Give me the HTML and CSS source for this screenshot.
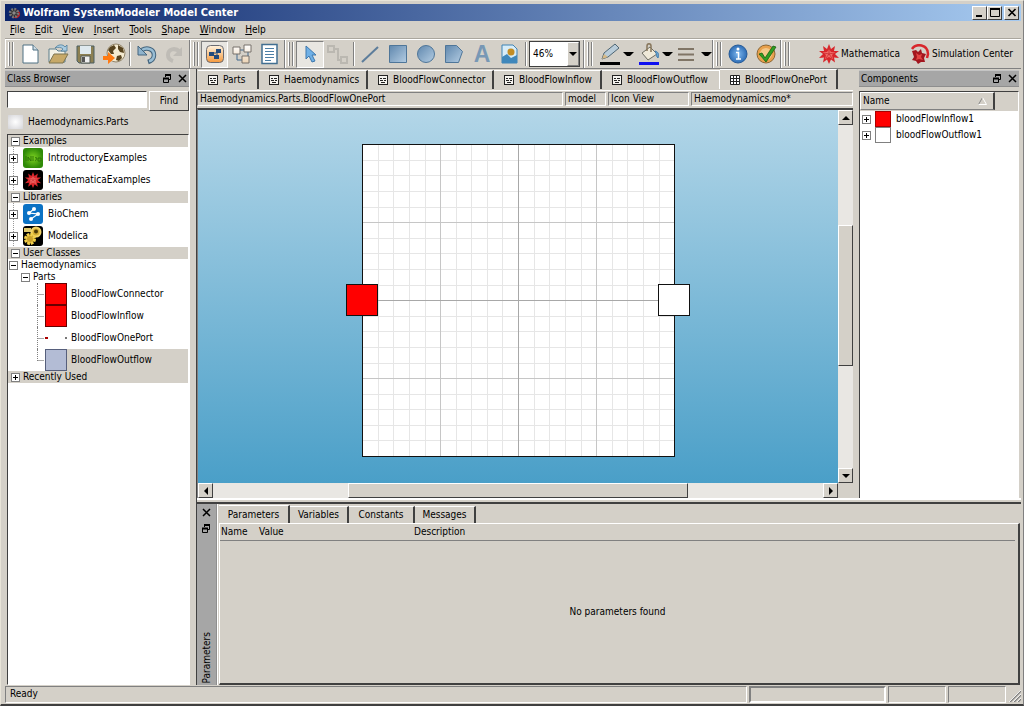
FILE: index.html
```html
<!DOCTYPE html>
<html lang="en">
<head>
<meta charset="utf-8">
<title>Wolfram SystemModeler Model Center</title>
<link rel="stylesheet" href="styles.css">
</head>
<body>
<svg class="defs" aria-hidden="true">
  <defs>
    <linearGradient id="blue" x1="0" y1="0" x2="1" y2="1"><stop offset="0" stop-color="#5f87ad"/><stop offset="1" stop-color="#b4cde3"/></linearGradient>
    <linearGradient id="orange" x1="0" y1="0" x2="0" y2="1"><stop offset="0" stop-color="#fff3df"/><stop offset="1" stop-color="#f5993c"/></linearGradient>
    <linearGradient id="pale" x1="0" y1="0" x2="0" y2="1"><stop offset="0" stop-color="#ffffff"/><stop offset="1" stop-color="#ecd3b4"/></linearGradient>
    <radialGradient id="green"><stop offset="0" stop-color="#7ed321"/><stop offset="1" stop-color="#2f8a08"/></radialGradient>
    <radialGradient id="info"><stop offset="0" stop-color="#7db7ee"/><stop offset="1" stop-color="#2d6cb5"/></radialGradient>
    <symbol id="plus" viewBox="0 0 9 9"><rect x=".5" y=".5" width="8" height="8" fill="#fff" stroke="#808080"/><path d="M2 4.5h5M4.5 2v5" stroke="#000"/></symbol>
    <symbol id="minus" viewBox="0 0 9 9"><rect x=".5" y=".5" width="8" height="8" fill="#fff" stroke="#808080"/><path d="M2 4.5h5" stroke="#000"/></symbol>
    <symbol id="float" viewBox="0 0 9 9"><path d="M2.5 3V1.5h5v4H6" fill="none" stroke="#000"/><path d="M2 1h6" stroke="#000" stroke-width="2"/><path d="M.5 4v4.500h5V4" fill="none" stroke="#000"/><path d="M0 4.500h6" stroke="#000" stroke-width="2"/></symbol>
    <symbol id="close" viewBox="0 0 9 9"><path d="M1 1l7 7M8 1L1 8" stroke="#000" stroke-width="1.500"/></symbol>
    <symbol id="diagram" viewBox="0 0 10 10"><rect x=".5" y=".5" width="9" height="9" fill="#f4f2ee" stroke="#222"/><path d="M2 3.500h2M5 3.500h3M2 5.500h3M6 5.500h2M3 7.500h4" stroke="#222"/></symbol>
    <symbol id="grid" viewBox="0 0 10 10"><path d="M.5 .5h9v9h-9zM3.500 0v10M6.500 0v10M0 3.500h10M0 6.500h10" fill="#fff" stroke="#222"/></symbol>
    <symbol id="spikey" viewBox="0 0 20 20"><path d="M10 0l2 5 4-3-1 5 5 0-4 3 4 4-5-.500 1 5-4-3-2 4.500-2-4.500-4 3 1-5-5 .500 4-4-4-3 5 0-1-5 4 3z" fill="#d8262b"/><path d="M10 5l2 3 4 0-3 3 1 4-4-2-4 2 1-4-3-3 4 0z" fill="#f26a66"/><path d="M10 5v5l5-1M10 10l3 4M10 10l-3 4M10 10L5 9" fill="none" stroke="#c0242a" stroke-width=".7"/></symbol>
  </defs>
</svg>
<div class="window">
  <header class="titlebar">
    <svg class="app-icon" viewBox="0 0 16 16"><circle cx="10" cy="9" r="5" fill="#b0232b"/><circle cx="8" cy="8" r="4.500" fill="#333" stroke="#777" stroke-width="3" stroke-dasharray="2 1.500"/><circle cx="8" cy="8" r="2" fill="#888"/></svg>
    <h1>Wolfram SystemModeler Model Center</h1>
    <div class="win-buttons">
      <button class="win-btn" aria-label="Minimize"><svg viewBox="0 0 10 9"><path d="M1 8h6" stroke="#000" stroke-width="2"/></svg></button>
      <button class="win-btn" aria-label="Maximize"><svg viewBox="0 0 10 9"><path d="M.5 1.500v7h9v-7" fill="none" stroke="#000"/><path d="M0 1h10" stroke="#000" stroke-width="2"/></svg></button>
      <button class="win-btn last" aria-label="Close"><svg viewBox="0 0 10 9"><path d="M1.500 1l7 7M8.500 1l-7 7" stroke="#000" stroke-width="1.700"/></svg></button>
    </div>
  </header>
  <nav class="menubar">
    <button><u>F</u>ile</button><button><u>E</u>dit</button><button><u>V</u>iew</button><button><u>I</u>nsert</button><button><u>T</u>ools</button><button><u>S</u>hape</button><button><u>W</u>indow</button><button><u>H</u>elp</button>
  </nav>
  <div class="toolbars">
    <div class="toolbar tb-file">
      <i class="handle"></i>
      <button class="tool" aria-label="New"><svg viewBox="0 0 24 24"><path d="M5 3h10l5 5v13H5z" fill="#fff" stroke="#4f7183"/><path d="M15 3v5h5" fill="#cfdde6" stroke="#4f7183"/></svg></button>
      <button class="tool" aria-label="Open"><svg viewBox="0 0 24 24"><path d="M3 20V7h7l2 2h7v11z" fill="#f3f1e4" stroke="#5d7f8d"/><path d="M3 21l5-9h14l-5 9z" fill="#c7a968" stroke="#7d7450"/><path d="M9 6c3-4 8-4 10-1l2-2v6h-6l2-2c-2-2-5-2-8-1z" fill="#a9cbe0" stroke="#4f7e9c" stroke-width=".8"/></svg></button>
      <button class="tool" aria-label="Save"><svg viewBox="0 0 24 24"><path d="M3 4h17v17H5l-2-2z" fill="#8d8052" stroke="#4b5f62"/><path d="M6 4h11v8H6z" fill="#dfe9ee"/><path d="M7 14h9v7H7z" fill="#eee" stroke="#545a50"/><path d="M8 15h3v5H8z" fill="#555"/></svg></button>
      <button class="tool" aria-label="Import from web"><svg viewBox="0 0 24 24"><circle cx="14" cy="11" r="9" fill="#f4ead0" stroke="#92846a"/><path d="M8 5l4-2 2 3-3 3 1 3-3 0-3-4zM16 3l5 3 1 5-4-1-2-3zM15 14l4-1 1 3-3 3-3-1z" fill="#57431f"/><path d="M1 14h5v-4l7 6-7 6v-4H1z" fill="#ff7a12"/></svg></button>
      <i class="sep"></i>
      <button class="tool" aria-label="Undo"><svg viewBox="0 0 24 24"><path d="M8 8c5-3 12-1 12 5 0 4-3 6-6 7" fill="none" stroke="#45657e" stroke-width="4.500"/><path d="M8 8c5-3 12-1 12 5 0 4-3 6-5 6" fill="none" stroke="#98bdd4" stroke-width="2.500"/><path d="M4 4v9h9z" fill="#8fb3cc" stroke="#45657e"/></svg></button>
      <button class="tool" aria-label="Redo" disabled><svg viewBox="0 0 24 24"><path d="M18 10c-5-5-12-3-12 3 0 3 2 5 5 6" fill="none" stroke="#bfbcb6" stroke-width="4"/><path d="M20 5v9h-9z" fill="#bfbcb6"/></svg></button>
    </div>
    <div class="toolbar tb-view">
      <i class="handle"></i>
      <button class="tool active" aria-label="Icon view"><svg viewBox="0 0 24 24"><rect x="3.500" y="3.500" width="17" height="17" rx="4" fill="url(#orange)" stroke="#6a6a70"/><path d="M6 10h5v4H6zM13 7h5v4h-5zM11 13h5v4h-5z" fill="#234b7d"/><path d="M11 11h2M14 11v3" stroke="#234b7d"/></svg></button>
      <button class="tool" aria-label="Diagram view"><svg viewBox="0 0 24 24"><path d="M10 8h4M7 12v6h5M18 10v5" fill="none" stroke="#456a8e"/><path d="M3 5h7v7H3zM14 3h7v7h-7zM12 14h7v7h-7z" fill="url(#pale)" stroke="#76716a"/></svg></button>
      <button class="tool" aria-label="Text view"><svg viewBox="0 0 24 24"><path d="M5 2.500h15v19H5z" fill="#fff" stroke="#426f91" stroke-width="1.500"/><path d="M8 6.500h9M8 9.500h9M8 12.500h9M8 15.500h9M8 18.500h6" stroke="#4c7fa6"/></svg></button>
    </div>
    <div class="toolbar tb-draw">
      <i class="handle"></i>
      <button class="tool active" aria-label="Select"><svg viewBox="0 0 24 24"><path d="M8 4l10 9h-4l3 6-3 1-3-6-3 3z" fill="#6fb0e6" stroke="#3f78ad"/></svg></button>
      <button class="tool" aria-label="Connect" disabled><svg viewBox="0 0 24 24"><path d="M2 4h6v6H2zM15 15h6v6h-6zM8 7h4v11h3" fill="none" stroke="#bbb8b1" stroke-width="2"/></svg></button>
      <i class="sep"></i>
      <button class="tool" aria-label="Line"><svg viewBox="0 0 24 24"><path d="M4 20L20 5" stroke="#5d7d9b" stroke-width="2"/></svg></button>
      <button class="tool" aria-label="Rectangle"><svg viewBox="0 0 24 24"><path d="M3.500 3.500h17v17h-17z" fill="url(#blue)" stroke="#4f7699"/></svg></button>
      <button class="tool" aria-label="Ellipse"><svg viewBox="0 0 24 24"><circle cx="12" cy="12" r="8.500" fill="url(#blue)" stroke="#4f7699"/></svg></button>
      <button class="tool" aria-label="Polygon"><svg viewBox="0 0 24 24"><path d="M3.500 3.500h11l6 6-4 11h-13z" fill="url(#blue)" stroke="#4f7699"/></svg></button>
      <button class="tool glyph" aria-label="Text">A</button>
      <button class="tool" aria-label="Bitmap"><svg viewBox="0 0 24 24"><path d="M4 3h11l4 4v14H4z" fill="#d7ecf8" stroke="#3f83b5"/><path d="M4 15l5-3 4 4 6-3v8H4z" fill="#3f87bb"/><circle cx="13" cy="10" r="3.500" fill="#c28c24"/></svg></button>
      <i class="sep"></i>
      <label class="zoom"><select aria-label="Zoom"><option>46%</option></select><span class="drop"></span></label>
    </div>
    <div class="toolbar tb-style">
      <i class="handle"></i>
      <button class="tool" aria-label="Line color"><svg viewBox="0 0 24 24"><path d="M4 17l2-6L17 2l4 4-11 9z" fill="#b9ccd9" stroke="#4e6674"/><path d="M4 17l2-5 4 3z" fill="#d7b985"/><path d="M2 21.500h20" stroke="#000" stroke-width="3"/></svg></button><i class="caret"></i>
      <button class="tool" aria-label="Fill color"><svg viewBox="0 0 24 24"><path d="M5 11l8-6 7 7-9 6z" fill="#efe9d8" stroke="#6c6c62"/><path d="M10 9V4c0-3 4-3 4 0v6" fill="none" stroke="#87765b" stroke-width="1.500"/><path d="M18 9c4 1 4 4 3 7-2-1-1-4-3-7" fill="#6ca5d0" stroke="#4581b1"/><path d="M2 21.500h20" stroke="#1010f0" stroke-width="3"/></svg></button><i class="caret"></i>
      <button class="tool" aria-label="Line style"><svg viewBox="0 0 24 24"><path d="M2 7h16M2 12.500h16M2 18h16" stroke="#807566" stroke-width="2"/></svg></button><i class="caret"></i>
    </div>
    <div class="toolbar tb-check">
      <i class="handle"></i>
      <button class="tool" aria-label="Information"><svg viewBox="0 0 24 24"><circle cx="12" cy="12" r="9" fill="url(#info)" stroke="#265b98"/><circle cx="12" cy="7" r="1.500" fill="#fff"/><path d="M10 10.500h2.500v6M10 17h5" fill="none" stroke="#fff" stroke-width="1.500"/></svg></button>
      <button class="tool" aria-label="Validate"><svg viewBox="0 0 24 24"><circle cx="12" cy="12" r="9" fill="#e8a04c" stroke="#8c6735"/><circle cx="12" cy="12" r="6" fill="#f4c888"/><path d="M5 12l3-1 3 5 8-12 3 1-10 15z" fill="#2f9e22" stroke="#17600f" stroke-width=".8"/></svg></button>
    </div>
    <div class="toolbar tb-apps">
      <i class="handle"></i>
      <div class="apps">
        <button class="app"><svg viewBox="0 0 20 20"><use href="#spikey"/></svg>Mathematica</button>
        <button class="app"><svg viewBox="0 0 20 20"><path d="M2 5C6-1 18 0 18 10l-1 4" fill="none" stroke="#d8262b" stroke-width="2.500"/><path d="M2 7l4-1 2 2 3-3 1 4 4 1-2 4 1 4-4 0-3 2-2-3-4-1 2-3z" fill="#a3161e"/><path d="M6 9l3 2 3-1-1 3 2 3-4-1-3 1 1-3z" fill="#e34343"/></svg>Simulation Center</button>
      </div>
    </div>
  </div>
  <main class="workspace">
    <aside class="dock browser">
      <div class="dock-title"><h2>Class Browser</h2><button aria-label="Float"><svg viewBox="0 0 9 9"><use href="#float"/></svg></button><button aria-label="Close"><svg viewBox="0 0 9 9"><use href="#close"/></svg></button></div>
      <form class="find"><input type="text" aria-label="Class name"><button type="button">Find</button></form>
      <div class="current"><i class="swatch"></i>Haemodynamics.Parts</div>
      <div class="tree">
        <div class="section"><button aria-label="Collapse"><svg viewBox="0 0 9 9"><use href="#minus"/></svg></button>Examples</div>
        <div class="node"><button aria-label="Expand"><svg viewBox="0 0 9 9"><use href="#plus"/></svg></button><svg class="pic" viewBox="0 0 20 20"><rect width="20" height="20" rx="3" fill="url(#green)"/><path d="M3 8v5M5 13V9l3 4V8M10 8v5M12 10c3-2 1 3 0 3M15 10h3v3h-3z" fill="none" stroke="#2c7407"/></svg>IntroductoryExamples</div>
        <div class="node"><button aria-label="Expand"><svg viewBox="0 0 9 9"><use href="#plus"/></svg></button><svg class="pic" viewBox="0 0 20 20"><rect width="20" height="20" rx="3"/><use href="#spikey" x="2" y="2" width="16" height="16"/></svg>MathematicaExamples</div>
        <div class="section"><button aria-label="Collapse"><svg viewBox="0 0 9 9"><use href="#minus"/></svg></button>Libraries</div>
        <div class="node"><button aria-label="Expand"><svg viewBox="0 0 9 9"><use href="#plus"/></svg></button><svg class="pic" viewBox="0 0 20 20"><rect width="20" height="20" rx="3" fill="#0b72c4"/><path d="M11 5l-5 4 9 1-7 5" fill="none" stroke="#fff" stroke-width="1.200"/><g fill="#fff"><circle cx="11" cy="5" r="2"/><circle cx="6" cy="9" r="2"/><circle cx="15" cy="10" r="2"/><circle cx="8" cy="15" r="2"/></g></svg>BioChem</div>
        <div class="node"><button aria-label="Expand"><svg viewBox="0 0 9 9"><use href="#plus"/></svg></button><svg class="pic" viewBox="0 0 20 20"><rect width="20" height="20" rx="3"/><path d="M1 2h7v4H1z" fill="#dfc96d"/><circle cx="13" cy="6" r="4.500" fill="#d5ae36" stroke="#f2d468" stroke-width="2"/><circle cx="13" cy="5.500" r="2" fill="#4a3807"/><circle cx="7" cy="13" r="4.500" fill="#c9a02c" stroke="#f2cf4a" stroke-width="3" stroke-dasharray="2.500 1"/></svg>Modelica</div>
        <div class="section"><button aria-label="Collapse"><svg viewBox="0 0 9 9"><use href="#minus"/></svg></button>User Classes</div>
        <div class="branch"><button aria-label="Collapse"><svg viewBox="0 0 9 9"><use href="#minus"/></svg></button>Haemodynamics</div>
        <div class="branch nested"><button aria-label="Collapse"><svg viewBox="0 0 9 9"><use href="#minus"/></svg></button>Parts</div>
        <div class="leaf"><i class="line"></i><span><svg viewBox="0 0 22 22"><rect x=".5" y=".5" width="21" height="21" fill="#f00" stroke="#600"/></svg>BloodFlowConnector</span></div>
        <div class="leaf"><i class="line"></i><span><svg viewBox="0 0 22 22"><rect x=".5" y=".5" width="21" height="21" fill="#f00" stroke="#600"/></svg>BloodFlowInflow</span></div>
        <div class="leaf"><i class="line"></i><span><svg viewBox="0 0 22 22"><path d="M0 10h3v2H0z" fill="#a00"/><path d="M20 10h2v2h-2z" fill="#777"/></svg>BloodFlowOnePort</span></div>
        <div class="leaf selected"><i class="line end"></i><span><svg viewBox="0 0 22 22"><rect x=".5" y=".5" width="21" height="21" fill="#b3bcd5" stroke="#565f7c"/></svg>BloodFlowOutflow</span></div>
        <div class="section"><button aria-label="Expand"><svg viewBox="0 0 9 9"><use href="#plus"/></svg></button>Recently Used</div>
      </div>
    </aside>
    <div class="right">
      <div class="upper">
        <section class="editor">
          <div class="tabs">
            <button class="tab"><svg viewBox="0 0 10 10"><use href="#diagram"/></svg>Parts</button>
            <button class="tab"><svg viewBox="0 0 10 10"><use href="#diagram"/></svg>Haemodynamics</button>
            <button class="tab"><svg viewBox="0 0 10 10"><use href="#diagram"/></svg>BloodFlowConnector</button>
            <button class="tab"><svg viewBox="0 0 10 10"><use href="#diagram"/></svg>BloodFlowInflow</button>
            <button class="tab"><svg viewBox="0 0 10 10"><use href="#diagram"/></svg>BloodFlowOutflow</button>
            <button class="tab current-tab"><svg viewBox="0 0 10 10"><use href="#grid"/></svg>BloodFlowOnePort</button>
          </div>
          <div class="info"><span>Haemodynamics.Parts.BloodFlowOnePort</span><span>model</span><span>Icon View</span><span>Haemodynamics.mo*</span></div>
          <div class="view">
            <div class="canvas">
              <svg class="sheet" viewBox="346 144 344 313">
                <rect x="362.500" y="144.500" width="312" height="312" fill="#fff"/>
                <path d="M378.500 145v312M393.500 145v312M409.500 145v312M425.500 145v312M456.500 145v312M471.500 145v312M487.500 145v312M502.500 145v312M534.500 145v312M549.500 145v312M565.500 145v312M581.500 145v312M612.500 145v312M627.500 145v312M643.500 145v312M659.500 145v312M363 160.500h312M363 175.500h312M363 191.500h312M363 207.500h312M363 238.500h312M363 253.500h312M363 269.500h312M363 285.500h312M363 316.500h312M363 331.500h312M363 347.500h312M363 363.500h312M363 394.500h312M363 409.500h312M363 425.500h312M363 440.500h312" stroke="#e6e6e6"/>
                <path d="M440.500 145v312M596.500 145v312M363 222.500h312M363 378.500h312" stroke="#c6c6c6"/>
                <path d="M518.500 145v312M363 300.500h312" stroke="#a8a8a8"/>
                <rect x="362.500" y="144.500" width="312" height="312" fill="none" stroke="#111"/>
                <rect x="346.500" y="284.500" width="31" height="31" fill="#f00" stroke="#111"/>
                <rect x="658.500" y="284.500" width="31" height="31" fill="#fff" stroke="#111"/>
              </svg>
            </div>
            <div class="scroll vertical"><button aria-label="Scroll up"><i class="arrow up"></i></button><i class="track before"></i><i class="thumb"></i><i class="track after"></i><button aria-label="Scroll down"><i class="arrow down"></i></button></div>
            <div class="scroll horizontal"><button aria-label="Scroll left"><i class="arrow left"></i></button><i class="track before"></i><i class="thumb"></i><i class="track after"></i><button aria-label="Scroll right"><i class="arrow rightward"></i></button></div>
          </div>
        </section>
        <aside class="dock components">
          <div class="dock-title"><h2>Components</h2><button aria-label="Float"><svg viewBox="0 0 9 9"><use href="#float"/></svg></button><button aria-label="Close"><svg viewBox="0 0 9 9"><use href="#close"/></svg></button></div>
          <div class="list">
            <div class="list-head"><button>Name<svg viewBox="0 0 9 8"><path d="M.5 7.500L4.500 .5" stroke="#888"/><path d="M4.500 .5l4 7h-8" fill="none" stroke="#fff"/></svg></button></div>
            <div class="part"><button aria-label="Expand"><svg viewBox="0 0 9 9"><use href="#plus"/></svg></button><i class="box red"></i>bloodFlowInflow1</div>
            <div class="part"><button aria-label="Expand"><svg viewBox="0 0 9 9"><use href="#plus"/></svg></button><i class="box"></i>bloodFlowOutflow1</div>
          </div>
        </aside>
      </div>
      <section class="params">
        <div class="side-title"><button aria-label="Close"><svg viewBox="0 0 9 9"><use href="#close"/></svg></button><button aria-label="Float"><svg viewBox="0 0 9 9"><use href="#float"/></svg></button><h2>Parameters</h2></div>
        <div class="params-body">
          <div class="tabs">
            <button class="tab current-tab">Parameters</button><button class="tab">Variables</button><button class="tab">Constants</button><button class="tab">Messages</button>
          </div>
          <div class="sheet-area">
            <table><thead><tr><th class="c-name">Name</th><th class="c-value">Value</th><th>Description</th></tr></thead></table>
            <p class="empty">No parameters found</p>
          </div>
        </div>
      </section>
    </div>
  </main>
  <footer class="status"><span class="ready">Ready</span><span class="progress"></span><span class="cell"></span><span class="cell"></span><svg class="grip" viewBox="0 0 12 12"><path d="M1 12L12 1M5 12l7-7M9 12l3-3" stroke="#808080" stroke-width="1.500"/><path d="M0 12L12 0M4 12l8-8M8 12l4-4" stroke="#fff" stroke-width=".8"/></svg></footer>
</div>
</body>
</html>
```
FILE: styles.css
```css
:root {
  --face: #d4d0c8;
  --dark: #808080;
  --darker: #404040;
}
* { box-sizing: border-box; }
body {
  margin: 0;
  background: var(--face);
  color: #000;
  font: 10px/12px "DejaVu Sans Condensed", "DejaVu Sans", sans-serif;
}
h1, h2, p { margin: 0; font-size: inherit; font-weight: normal; }
button, input, select { font: inherit; color: inherit; }
button { padding: 0; border: 0; background: none; white-space: nowrap; }
svg { display: block; flex: none; }
i { display: block; flex: none; }
.defs { position: absolute; width: 0; height: 0; }

.window {
  display: flex;
  flex-direction: column;
  min-height: 100vh;
  padding: 3px 2px 1px 4px;
  border: 1px solid #e8e4d8;
  border-right-color: var(--dark);
  border-bottom: 2px solid var(--darker);
}

.titlebar {
  display: flex;
  align-items: center;
  gap: 2px;
  height: 17px;
  padding: 0 2px;
  background: linear-gradient(90deg, #0a246a, #a6caf0);
  color: #fff;
}
.titlebar h1 { flex: 1; font-weight: bold; font-size: 10px; }
.app-icon { width: 14px; height: 14px; }
.win-buttons { display: flex; }
.win-btn {
  display: grid;
  place-items: center;
  width: 15px;
  height: 14px;
  background: var(--face);
  border: 1px solid #fff;
  border-right-color: var(--darker);
  border-bottom-color: var(--darker);
}
.win-btn svg { width: 10px; height: 9px; }
.win-btn.last { margin-left: 2px; }
.titlebar h1 { font-size: 11px; }

.menubar { display: flex; height: 18px; border-bottom: 1px solid #aaa69e; }
.menubar button { padding: 0 5px; }

.toolbars { display: flex; height: 30px; border-top: 1px solid #fff; border-bottom: 1px solid var(--dark); }
.toolbar { display: flex; align-items: center; flex: none; padding-left: 3px; border-right: 1px solid var(--dark); box-shadow: inset 1px 0 #fff; }
.tb-file { width: 185px; }
.tb-view { width: 95px; }
.tb-draw { width: 299px; }
.tb-style { width: 129px; }
.tb-check { width: 68px; }
.tb-apps { flex: 1; border-right: 0; }
.handle { width: 6px; height: 24px; margin-right: 2px; border: solid #fff; border-width: 0 1px; background: linear-gradient(90deg, var(--dark) 1px, var(--face) 1px, var(--face) 3px, var(--dark) 3px); }
.sep { width: 2px; height: 24px; margin: 0 1px; background: var(--dark); border-right: 1px solid #fff; }
.tool { display: grid; place-items: center; flex: none; width: 28px; height: 27px; }
.tool svg { width: 24px; height: 24px; }
.tb-view .tool { width: 27px; }
.tool.active { background: #e8e6e1; border: 1px solid var(--dark); border-right-color: #fff; border-bottom-color: #fff; }
.glyph { font: bold 23px/24px "Liberation Sans", sans-serif; color: #7898b5; }
.zoom { display: flex; width: 51px; height: 26px; margin-left: 1px; border: 1px solid var(--darker); background: #fff; }
.zoom select { flex: 1; min-width: 0; padding: 0 0 0 3px; border: 0; background: none; appearance: none; }
.drop { display: grid; place-items: center; width: 12px; background: var(--face); border: 1px solid #fff; border-right-color: var(--dark); border-bottom-color: var(--dark); }
.drop::after, .caret::after { content: ""; display: block; border: 4px solid transparent; border-top-color: #000; border-bottom: 0; }
.tb-style .tool { width: 26px; margin-left: 2px; }
.caret { width: 11px; }
.apps { display: flex; flex: 1; justify-content: flex-end; gap: 10px; padding-right: 8px; }
.app { display: flex; align-items: center; gap: 2px; }
.app svg { width: 20px; height: 20px; }

.workspace { display: flex; flex: 1; min-height: 0; }
.dock { display: flex; flex-direction: column; }
.browser { width: 185px; border-right: 1px solid #fff; }
.dock-title { display: flex; align-items: center; gap: 6px; height: 17px; margin-top: 1px; padding: 0 2px 0 2px; background: #a6a6a6; border-top: 1px solid #c4c4c4; border-bottom: 1px solid #8e8e8e; }
.dock-title h2 { flex: 1; }
.dock-title svg, .side-title svg, .tree button svg, .part button svg { width: 9px; height: 9px; }
.find { display: flex; gap: 2px; padding: 4px 0 1px 2px; }
.find input { flex: 1; min-width: 0; height: 17px; border: 1px solid #fff; border-top-color: var(--darker); border-left-color: var(--darker); background: #fff; }
.find button { width: 40px; height: 20px; border: 1px solid #fff; border-right-color: var(--darker); border-bottom-color: var(--darker); }
.current { display: flex; align-items: center; gap: 5px; height: 19px; margin-bottom: 3px; padding-left: 3px; }
.swatch { width: 15px; height: 14px; background: radial-gradient(#fff, #d4d4d8); }
.tree { flex: 1; margin-left: 2px; border: 1px solid var(--darker); border-right-color: #fff; border-bottom-color: #fff; background: #fff; }
.section, .branch, .node { display: flex; align-items: center; }
.section { gap: 3px; height: 12px; padding-left: 3px; background: var(--face); }
.node { gap: 5px; height: 22px; padding-left: 1px; background: repeating-linear-gradient(#999 0 1px, #fff 1px 2px) 5px 0 / 1px 100% no-repeat; }
.pic { width: 20px; height: 20px; }
.branch { gap: 3px; height: 12px; padding-left: 1px; }
.branch.nested { padding-left: 13px; }
.leaf { display: flex; height: 22px; padding-left: 29px; }
.leaf span { display: flex; align-items: center; gap: 4px; flex: 1; }
.leaf svg { width: 22px; height: 22px; }
.line { width: 8px; border-left: 1px dotted var(--dark); background: linear-gradient(#aaa, #aaa) 0 11px / 6px 1px no-repeat; }
.line.end { height: 12px; }
.leaf.selected span { background: var(--face); }

.right { display: flex; flex-direction: column; flex: 1; min-width: 0; margin-left: 6px; border-left: 1px solid var(--darker); }
.upper { display: flex; flex: 1; border-bottom: 2px solid #fff; }
.editor { display: flex; flex-direction: column; flex: 1; min-width: 0; padding-right: 3px; }
.tabs { display: flex; }
.editor .tabs { display: grid; grid-template-columns: 61px 109px 126px 108px 118px 118px; align-items: end; height: 22px; padding: 0 0 1px 1px; border-bottom: 1px solid #fff; }
.tab { display: flex; align-items: center; border-right: 2px solid var(--darker); border-top: 1px solid #fff; }
.editor .tab { gap: 5px; padding: 0 5px 0 10px; height: 19px; }
.editor .tab svg { width: 10px; height: 10px; }
.editor .current-tab { height: 20px; }
.editor .tab:nth-last-child(2) { border-right: 1px solid #fff; }
.info { display: grid; grid-template-columns: 1fr 41px 81px 162px; gap: 2px; padding: 1px 0 2px 0; }
.info span { height: 14px; padding-left: 2px; border: 1px solid #fff; border-top-color: var(--dark); border-left-color: var(--dark); }
.view { display: grid; flex: 1; grid-template-columns: 1fr 15px; grid-template-rows: 1fr 15px; border-top: 2px solid var(--darker); border-left: 1px solid var(--dark); }
.canvas { display: grid; place-items: center; padding-top: 8px; background: linear-gradient(#b3d6e8, #4a9fc8); overflow: hidden; }
.sheet { width: 344px; height: 313px; }
.scroll { display: flex; }
.vertical { flex-direction: column; }
.scroll button, .thumb { border: 1px solid #fff; border-right-color: var(--darker); border-bottom-color: var(--darker); background: var(--face); }
.scroll button { display: grid; place-items: center; flex: none; width: 15px; height: 15px; }
.track { background: #e9e7e3; }
.vertical .before { flex: 101; }
.vertical .thumb { flex: 140; }
.vertical .after { flex: 103; }
.horizontal .before { flex: 135; }
.horizontal .thumb { flex: 340; }
.horizontal .after { flex: 135; }
.arrow { border: 4px solid transparent; }
.up { border-top: 0; border-bottom-color: #000; }
.down { border-bottom: 0; border-top-color: #000; }
.left { border-left: 0; border-right-color: #000; }
.rightward { border-right: 0; border-left-color: #000; }

.components { width: 165px; padding: 0 2px 0 3px; }
.list { flex: 1; border: 1px solid var(--darker); border-right-color: #fff; border-bottom: 0; background: #fff; margin-top: 4px; }
.list-head { background: var(--face); height: 19px; }
.list-head button { display: flex; align-items: center; justify-content: space-between; width: 135px; height: 18px; padding: 0 6px 0 2px; border: 1px solid #fff; border-right: 2px solid var(--darker); border-bottom-color: var(--dark); }
.list-head svg { width: 9px; height: 8px; }
.part { display: flex; align-items: center; height: 16px; padding-left: 2px; }
.box { width: 16px; height: 16px; margin: 0 5px 0 4px; border: 1px solid var(--dark); background: #fff; }
.box.red { background: #f00; border-color: #a00; }

.params { display: flex; height: 183px; margin-top: 2px; border-top: 2px solid var(--darker); }
.side-title { display: flex; flex-direction: column; align-items: center; gap: 7px; width: 20px; padding: 4px 0 2px; background: #a6a6a6; border-right: 1px solid #8e8e8e; }
.side-title h2 { margin-top: auto; writing-mode: vertical-rl; transform: rotate(180deg); }
.params-body { display: flex; flex-direction: column; flex: 1; padding: 1px 1px 0 1px; border-left: 1px solid #fff; }
.params .tabs { display: grid; grid-template-columns: 71px 59px 66px 61px; align-items: end; }
.params .tab { justify-content: center; height: 17px; }
.params .current-tab { height: 18px; }
.sheet-area { display: flex; flex-direction: column; flex: 1; border: 1px solid #fff; border-right: 2px solid var(--darker); border-bottom: 2px solid var(--darker); padding-right: 3px; }
table { width: 100%; border-collapse: collapse; border-bottom: 1px solid var(--dark); }
th { padding: 2px 0 2px 1px; font-weight: normal; text-align: left; }
.c-name { width: 38px; }
.c-value { width: 155px; }
.empty { margin: auto; }

.status { display: flex; gap: 2px; height: 17px; margin-top: 1px; align-items: stretch; }
.status span { border: 1px solid #fff; border-top-color: var(--dark); border-left-color: var(--dark); }
.status .ready { flex: 1; padding: 1px 4px; }
.status .progress { width: 137px; border-width: 2px; }
.status .cell { width: 58px; }
.grip { width: 12px; height: 12px; margin: 4px 0 0 1px; }
```
